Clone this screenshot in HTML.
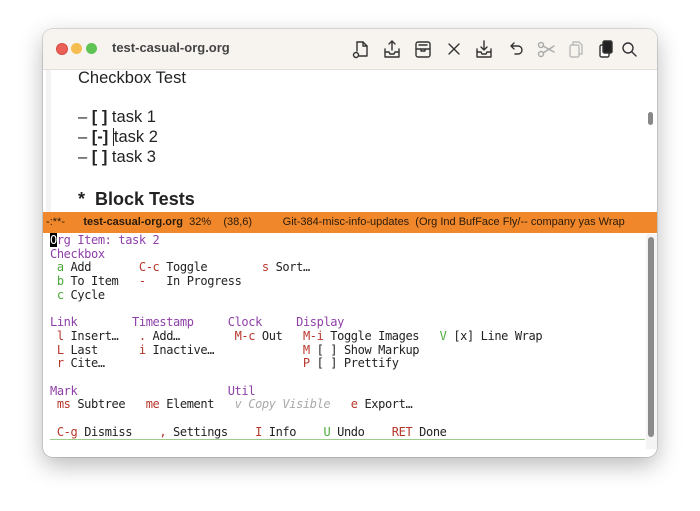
<!DOCTYPE html>
<html><head><meta charset="utf-8"><style>
body{margin:0;width:700px;height:511px;background:#fff;position:relative;overflow:hidden;font-family:"Liberation Sans",sans-serif}
.win{position:absolute;left:43px;top:29px;width:614px;height:428px;border-radius:10px;background:#fff;box-shadow:0 8px 24px rgba(0,0,0,.28),0 0 0 1px rgba(0,0,0,.12);overflow:hidden}
.tb{position:absolute;left:0;top:0;width:614px;height:40px;background:#f7f4ef;border-bottom:1px solid #e3e0dc}
.dot{position:absolute;top:14px;width:12px;height:12px;border-radius:50%}
.title{position:absolute;left:69px;top:11px;font-size:13px;color:#444;font-weight:bold;letter-spacing:0}
.ic{position:absolute;top:9px}
.ed{position:absolute;left:0;top:41px;width:614px;height:142px;background:#fff}
.fr{position:absolute;left:3px;top:41px;width:5px;height:142px;background:#f3f3f3}
.t{position:absolute;left:35px;font-size:16.5px;color:#222;white-space:pre}
.ml{position:absolute;left:0;top:183px;width:614px;height:21px;background:#f0882b;font-size:11px;color:#2a1a0a;white-space:pre;line-height:21px}
.bp{position:absolute;left:7px;top:205px;font-family:"DejaVu Sans Mono",monospace;font-size:12px;letter-spacing:-0.39px;line-height:13.7px;color:#222;white-space:pre;margin:0}
.p{color:#8e3fa8}.r{color:#b8372b}.g{color:#4caa3c}.v{color:#aaa;font-style:italic}
</style></head><body>
<div class="win">
 <div class="tb">
  <div class="dot" style="left:13px;background:#ec5f57;border:1px solid #d44b44;width:10px;height:10px;top:14px"></div>
  <div class="dot" style="left:28px;background:#f5bd4f;width:11px;height:11px"></div>
  <div class="dot" style="left:43px;background:#5fc454;width:11px;height:11px"></div>
  <div class="title">test-casual-org.org</div>
  <svg class="ic" style="left:308px" width="300" height="22" viewBox="0 0 300 22" fill="none" stroke="#333" stroke-width="1.4" stroke-linecap="round" stroke-linejoin="round">
   <path d="M6 4h6l4 4v10h-8"/><path d="M12 4v4h4"/><path d="M6 4v9"/><circle cx="5" cy="17" r="2.5"/>
   <path d="M34 11v8h14v-8"/><path d="M34 14h4l1 2h4l1-2h4"/><path d="M41 12V3M38 6l3-3 3 3"/>
   <rect x="65" y="4" width="14" height="15" rx="2"/><path d="M65 11h14M70 11v2h4v-2M68 7h8"/>
   <path d="M98 6l10 10M108 6L98 16"/>
   <path d="M126 11v8h14v-8"/><path d="M126 14h4l1 2h4l1-2h4"/><path d="M133 3v9M130 9l3 3 3-3"/>
   <path d="M160 8h7a4 4 0 0 1 0 8h-3M160 8l3-3M160 8l3 3"/>
   <g stroke="#aaa"><circle cx="190" cy="7" r="2.5"/><circle cx="190" cy="16" r="2.5"/><path d="M192 8l11 6M192 15l11-7"/></g>
   <g stroke="#bbb"><rect x="219" y="7" width="9" height="12" rx="1.5"/><path d="M222 7V4h6l3 3v9h-3"/></g>
   <rect x="249" y="7" width="9" height="12" rx="1.5" fill="#fff"/><rect x="252" y="3" width="9" height="12" rx="1.5" fill="#222"/>
   <circle cx="277" cy="10" r="5"/><path d="M281 14l4 4"/>
  </svg>
 </div>
 <div class="ed"></div>
 <div class="fr"></div>
 <div class="t" style="top:40px">Checkbox Test</div>
 <div class="t" style="top:79px">– <b>[ ]</b> task 1</div>
 <div class="t" style="top:99px">– <b>[-]</b> <span style="border-left:1.5px solid #222">t</span>ask 2</div>
 <div class="t" style="top:119px">– <b>[ ]</b> task 3</div>
 <div class="t" style="top:160px;font-size:18px;font-weight:bold">*&nbsp; Block Tests</div>
 <div style="position:absolute;left:605px;top:83px;width:5px;height:13px;border-radius:3px;background:#888"></div>
 <div class="ml"> -:**-      <b>test-casual-org.org</b>  32%    (38,6)          Git-384-misc-info-updates  (Org Ind BufFace Fly/-- company yas Wrap</div>
 <pre class="bp"><span style="background:#000;color:#fff">O</span><span class="p">rg Item: task 2</span>
<span class="p">Checkbox</span>
 <span class="g">a</span> Add       <span class="r">C-c</span> Toggle        <span class="r">s</span> Sort…
 <span class="g">b</span> To Item   <span class="r">-</span>   In Progress
 <span class="g">c</span> Cycle

<span class="p">Link</span>        <span class="p">Timestamp</span>     <span class="p">Clock</span>     <span class="p">Display</span>
 <span class="r">l</span> Insert…   <span class="r">.</span> Add…        <span class="r">M-c</span> Out   <span class="r">M-i</span> Toggle Images   <span class="g">V</span> [x] Line Wrap
 <span class="r">L</span> Last      <span class="r">i</span> Inactive…             <span class="r">M</span> [ ] Show Markup
 <span class="r">r</span> Cite…                             <span class="r">P</span> [ ] Prettify

<span class="p">Mark</span>                      <span class="p">Util</span>
 <span class="r">ms</span> Subtree   <span class="r">me</span> Element   <span class="v">v Copy Visible</span>   <span class="r">e</span> Export…

 <span class="r">C-g</span> Dismiss    <span class="r">,</span> Settings    <span class="r">I</span> Info    <span class="g">U</span> Undo    <span class="r">RET</span> Done</pre>
 <div style="position:absolute;left:7px;top:410px;width:595px;height:1px;background:#9ccb8a"></div>
 <div style="position:absolute;left:603px;top:205px;width:11px;height:215px;background:#f4f4f4"></div>
 <div style="position:absolute;left:605px;top:208px;width:6px;height:200px;border-radius:3px;background:#8a8a8a"></div>
</div>
</body></html>
